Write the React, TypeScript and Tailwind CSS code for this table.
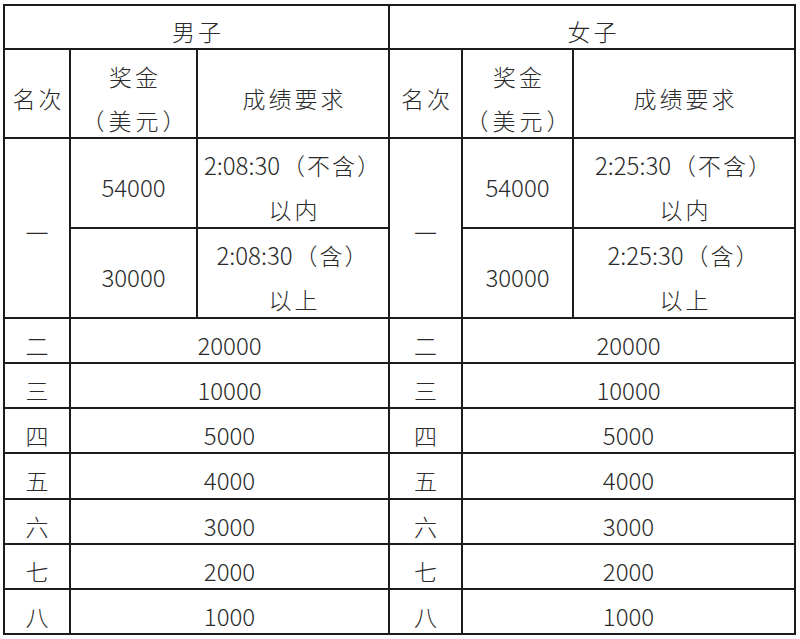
import React from "react";

const cell =
  "bg-white flex flex-col items-center justify-center pt-[8px] text-center leading-[44px] whitespace-nowrap";

const cj = "tracking-[3px] mr-[-3px]";
const num = "text-[24px]";

type Side = {
  title: string;
  req1: string;
  req2: string;
};

const ranks = [
  ["二", "20000"],
  ["三", "10000"],
  ["四", "5000"],
  ["五", "4000"],
  ["六", "3000"],
  ["七", "2000"],
  ["八", "1000"],
];

function Req({ time, note, tail }: { time: string; note: string; tail: string }) {
  return (
    <>
      <span>
        <span className={num}>{time}</span>
        <span className="tracking-[2px] ml-[2px]">{note}</span>
      </span>
      <span className={cj}>{tail}</span>
    </>
  );
}

export default function App() {
  const sides: Side[] = [
    { title: "男子", req1: "2:08:30", req2: "2:08:30" },
    { title: "女子", req1: "2:25:30", req2: "2:25:30" },
  ];
  return (
    <div className="w-[800px] h-[639px] bg-white overflow-hidden">
      <div
        className="ml-[3px] mt-[4px] w-[793px] p-[2px] gap-[2px] bg-[#1c1c1c] grid grid-cols-[64px_125px_190px_71px_109px_220px] grid-rows-[42px_87px_88px_88px_43px_43px_43px_44px_43px_43px_43px] text-[23px] font-light text-[#2a2a2a]"
        style={{ fontFamily: '"Noto Sans CJK SC", "Noto Sans", sans-serif' }}
      >
        {/* Row 1 */}
        <div className={`${cell} col-start-1 col-span-3 row-start-1`}>
          <span className={cj}>男子</span>
        </div>
        <div className={`${cell} col-start-4 col-span-3 row-start-1`}>
          <span className={cj}>女子</span>
        </div>

        {/* Row 2 headers */}
        {[1, 4].map((c) => (
          <React.Fragment key={c}>
            <div className={`${cell} row-start-2 ${c === 1 ? "col-start-1" : "col-start-4"}`}>
              <span className={cj}>名次</span>
            </div>
            <div className={`${cell} row-start-2 ${c === 1 ? "col-start-2" : "col-start-5"}`}>
              <span className={cj}>奖金</span>
              <span className="tracking-[4px] mr-[-4px]">（美元）</span>
            </div>
            <div className={`${cell} row-start-2 ${c === 1 ? "col-start-3" : "col-start-6"}`}>
              <span className={cj}>成绩要求</span>
            </div>
          </React.Fragment>
        ))}

        {/* First place, men */}
        <div className={`${cell} col-start-1 row-start-3 row-span-2`}>一</div>
        <div className={`${cell} ${num} col-start-2 row-start-3`}>54000</div>
        <div className={`${cell} col-start-3 row-start-3`}>
          <Req time={sides[0].req1} note="（不含）" tail="以内" />
        </div>
        <div className={`${cell} ${num} col-start-2 row-start-4`}>30000</div>
        <div className={`${cell} col-start-3 row-start-4`}>
          <Req time={sides[0].req2} note="（含）" tail="以上" />
        </div>

        {/* First place, women */}
        <div className={`${cell} col-start-4 row-start-3 row-span-2`}>一</div>
        <div className={`${cell} ${num} col-start-5 row-start-3`}>54000</div>
        <div className={`${cell} col-start-6 row-start-3`}>
          <Req time={sides[1].req1} note="（不含）" tail="以内" />
        </div>
        <div className={`${cell} ${num} col-start-5 row-start-4`}>30000</div>
        <div className={`${cell} col-start-6 row-start-4`}>
          <Req time={sides[1].req2} note="（含）" tail="以上" />
        </div>

        {/* Other ranks */}
        {ranks.map(([r, amt]) => (
          <React.Fragment key={r}>
            <div className={`${cell} col-start-1`}>{r}</div>
            <div className={`${cell} ${num} col-start-2 col-span-2`}>{amt}</div>
            <div className={`${cell} col-start-4`}>{r}</div>
            <div className={`${cell} ${num} col-start-5 col-span-2`}>{amt}</div>
          </React.Fragment>
        ))}
      </div>
    </div>
  );
}
